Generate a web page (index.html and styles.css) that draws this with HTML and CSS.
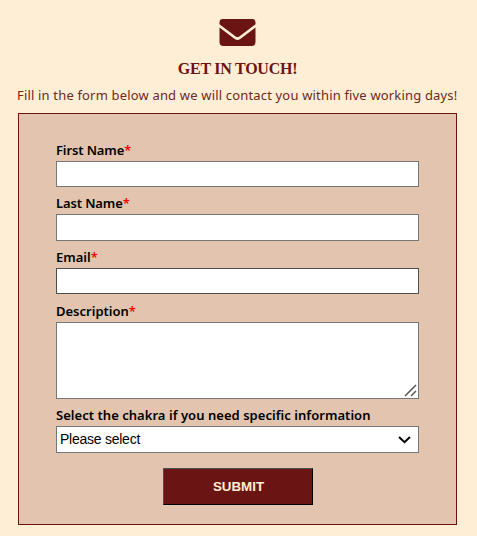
FILE: index.html
```
<!DOCTYPE html>
<html lang="en">
<head>
<meta charset="utf-8">
<title>Get in touch</title>
<link rel="stylesheet" href="styles.css">
</head>
<body>
<main class="contact">
  <svg class="icon" viewBox="0 0 36 27" aria-hidden="true">
    <path d="M3.4 0H32.6A3.4 3.4 0 0 1 36 3.4V5.3L19.8 17.4Q18 18.7 16.2 17.4L0 5.3V3.4A3.4 3.4 0 0 1 3.4 0Z"/>
    <path d="M0 8.4L15.2 19.9Q18 21.9 20.8 19.9L36 8.4V23A4 4 0 0 1 32 27H4A4 4 0 0 1 0 23Z"/>
  </svg>
  <h1 class="title">GET IN TOUCH!</h1>
  <p class="intro">Fill in the form below and we will contact you within five working days!</p>
  <form class="form">
    <label class="label label-name" for="first">First Name<span class="req">*</span></label>
    <input class="field" id="first" type="text">
    <label class="label label-name" for="last">Last Name<span class="req">*</span></label>
    <input class="field field-tall" id="last" type="text">
    <label class="label" for="email">Email<span class="req">*</span></label>
    <input class="field field-active" id="email" type="email">
    <label class="label" for="desc">Description<span class="req">*</span></label>
    <div class="control">
      <textarea class="field area" id="desc"></textarea>
      <svg class="grip" viewBox="0 0 13 13" aria-hidden="true"><path d="M1 12L12 1M7 12L12 7"/></svg>
    </div>
    <label class="label label-select" for="chakra">Select the chakra if you need specific information</label>
    <div class="control">
      <select class="field select" id="chakra"><option>Please select</option></select>
      <svg class="chevron" viewBox="0 0 13 8" aria-hidden="true"><path d="M1 1L6.5 6.2L12 1"/></svg>
    </div>
    <button class="submit" type="button">SUBMIT</button>
  </form>
</main>
</body>
</html>
```
FILE: styles.css
```
* {
  box-sizing: border-box;
}

body {
  margin: 0;
  background: #ffeed6;
  font-family: "Noto Sans", sans-serif;
}

.contact {
  display: flex;
  flex-direction: column;
  width: 439px;
  margin-left: 18px;
  padding-top: 19px;
}

.icon {
  display: block;
  width: 37px;
  height: 27px;
  margin: 0 auto;
  fill: #6b1414;
}

.title {
  margin: 12px 0 0;
  height: 22px;
  font: bold 16px/22px "Liberation Serif", serif;
  letter-spacing: -0.25px;
  color: #6b1414;
  text-align: center;
  white-space: nowrap;
}

.intro {
  margin: 5px 0 0 -1px;
  height: 28px;
  font-size: 13px;
  line-height: 20px;
  font-weight: 380;
  letter-spacing: 0.17px;
  color: #6b2a22;
  white-space: nowrap;
}

.form {
  display: flex;
  flex-direction: column;
  height: 412px;
  padding: 26px 37px 0;
  border: 1px solid #6b1414;
  background: #e2c4af;
}

.label {
  display: block;
  height: 21px;
  font-size: 13px;
  line-height: 20px;
  font-weight: 600;
  color: #000;
  white-space: nowrap;
}

.label-name {
  letter-spacing: -0.12px;
}

.label-select {
  letter-spacing: 0.04px;
}

.req {
  color: #f00;
}

.field {
  display: block;
  width: 363px;
  height: 26px;
  margin: 0 0 6px;
  padding: 0 3px;
  border: 1px solid #767676;
  border-radius: 0;
  outline: none;
  background: #fff;
}

.field-tall {
  height: 27px;
}

.field-active {
  border-color: #4f4f4f;
  margin-bottom: 7px;
}

.control {
  position: relative;
}

.area {
  height: 77px;
  resize: none;
}

.grip {
  position: absolute;
  right: 2px;
  top: 62px;
  width: 13px;
  height: 13px;
  fill: none;
  stroke: #555;
  stroke-width: 1.5;
}

.select {
  height: 27px;
  margin: 0;
  padding-bottom: 2px;
  appearance: none;
  font: 14px "Liberation Sans", sans-serif;
  letter-spacing: -0.25px;
  color: #000;
}

.chevron {
  position: absolute;
  right: 8px;
  top: 10px;
  width: 13px;
  height: 8px;
  fill: none;
  stroke: #000;
  stroke-width: 2;
}

.submit {
  width: 150px;
  height: 37px;
  margin: 15px 0 0 107px;
  padding: 0 0 0 1px;
  border: 1px solid;
  border-color: #4d4d4d #000 #000 #4d4d4d;
  background: #6b1414;
  color: #ffeed6;
  font: bold 13.333px "Liberation Sans", sans-serif;
}
```
